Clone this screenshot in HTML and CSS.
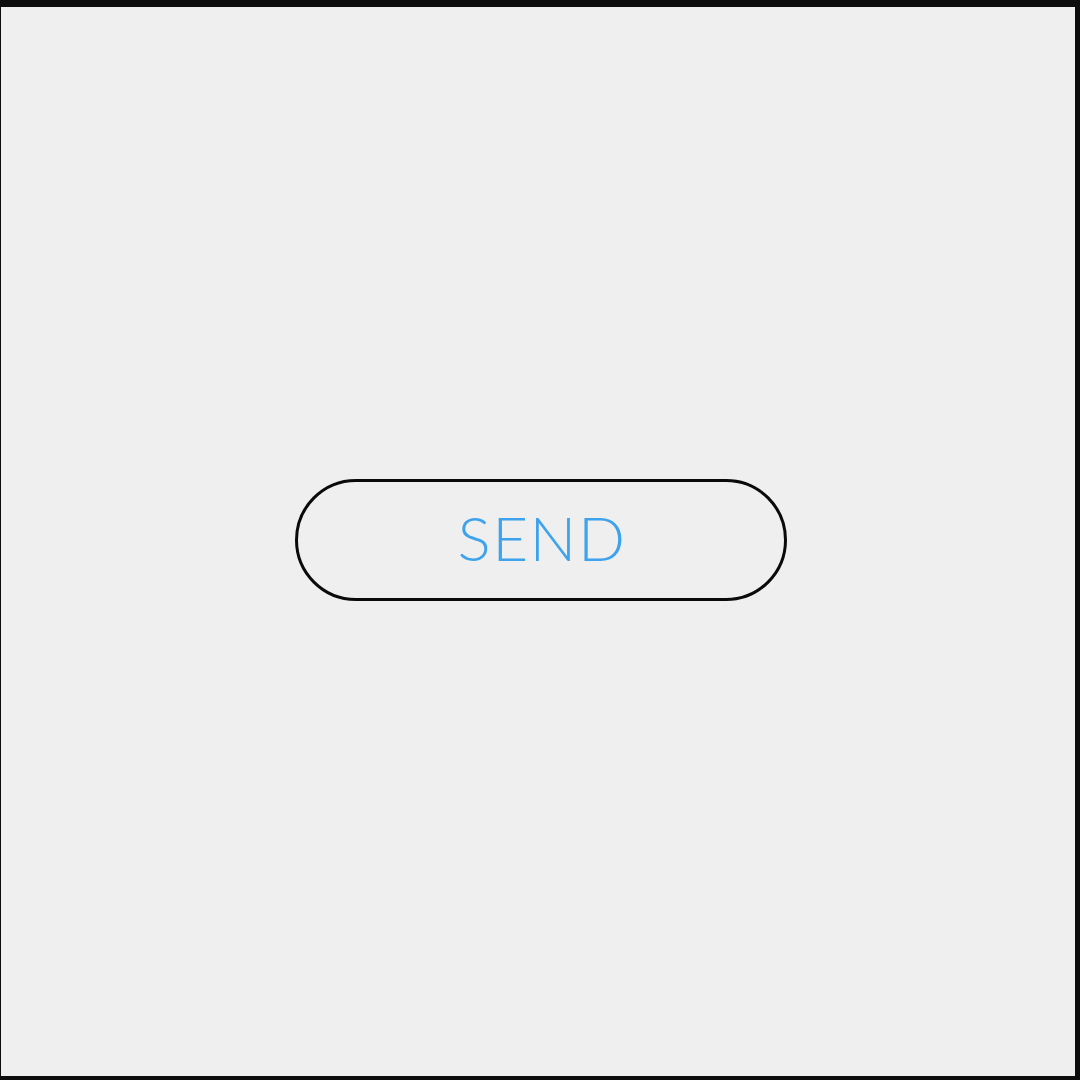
FILE: index.html
```html
<!DOCTYPE html>
<html>
<head>
<meta charset="utf-8">
<link rel="stylesheet" href="styles.css">
</head>
<body>
<div class="frame">
  <button class="send"><span class="label">SEND</span></button>
</div>
</body>
</html>
```
FILE: styles.css
```css
html, body {
  margin: 0;
  padding: 0;
  width: 1080px;
  height: 1080px;
  background: #111;
}
.frame {
  box-sizing: border-box;
  width: 1080px;
  height: 1080px;
  border-style: solid;
  border-color: #0d0d0d;
  border-width: 7px 5px 4px 1px;
  background: #efefef;
  display: flex;
  align-items: center;
  justify-content: center;
}
.send {
  box-sizing: border-box;
  width: 492px;
  height: 122px;
  margin-top: -4px;
  margin-left: 6px;
  border: 3px solid #0a0a0a;
  border-radius: 61px;
  background: transparent;
  color: #3ea3ec;
  font-family: Lato, "Noto Sans", sans-serif;
  font-weight: 300;
  font-size: 62px;
  letter-spacing: 1.5px;
  line-height: 1;
  padding: 0 0 6px 2px;
  display: flex;
  align-items: center;
  justify-content: center;
}
```
